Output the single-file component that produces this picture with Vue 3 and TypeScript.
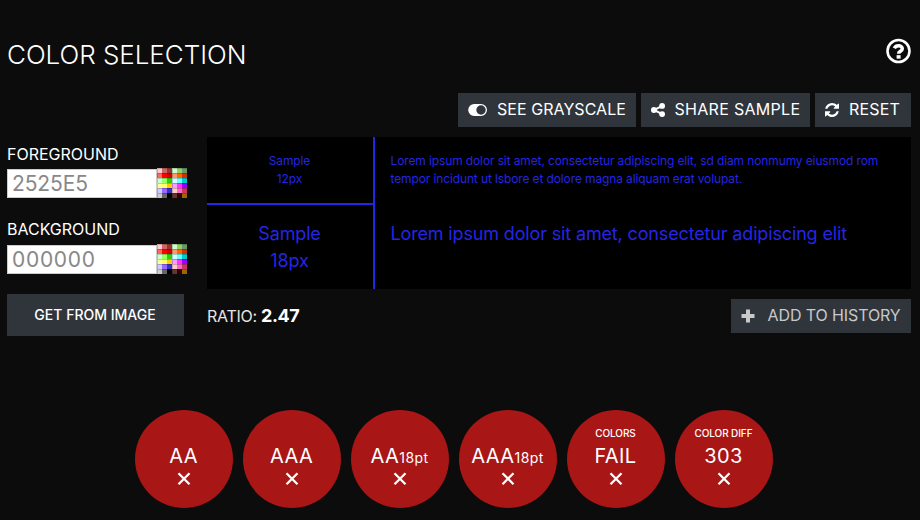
<script setup lang="ts">
import { ref } from 'vue'

interface Field {
  key: string
  label: string
  value: string
}

interface Result {
  top: string
  main: string
  suffix: string
}

const fields = ref<Field[]>([
  { key: 'fg', label: 'FOREGROUND', value: '2525E5' },
  { key: 'bg', label: 'BACKGROUND', value: '000000' },
])

const results: Result[] = [
  { top: '', main: 'AA', suffix: '' },
  { top: '', main: 'AAA', suffix: '' },
  { top: '', main: 'AA', suffix: '18pt' },
  { top: '', main: 'AAA', suffix: '18pt' },
  { top: 'COLORS', main: 'FAIL', suffix: '' },
  { top: 'COLOR DIFF', main: '303', suffix: '' },
]

const palette: string[] = [
  '#ffcccc', '#cc6666', '#993333', '#ccffcc', '#99cc66', '#669966',
  '#ff6666', '#ff0000', '#cc0000', '#ff9966', '#ff6600', '#cc3300',
  '#ccffcc', '#99ff66', '#33cc00', '#ccffff', '#66ffff', '#00cccc',
  '#ffff99', '#ffff66', '#ffcc00', '#ff99ff', '#ff33ff', '#9900ff',
  '#ccccff', '#9966ff', '#3333cc', '#ffcccc', '#ff66cc', '#cc3366',
  '#cccccc', '#666666', '#000000', '#663333', '#330000', '#996600',
]
</script>

<template>
  <main class="page">
    <header class="header">
      <h1 class="title">COLOR SELECTION</h1>
      <svg class="help" viewBox="0 0 26 26" fill="none" stroke="#fff">
        <circle cx="13.5" cy="13" r="11" stroke-width="2.6" />
        <path d="M9.300 10.300C10.300 8.400 11.600 7.800 13.500 7.800c2.200 0 3.800 1.200 3.800 2.900 0 2.600-3.700 2.500-3.700 5" stroke-width="3.500" />
        <path d="M11.600 18.900h4" stroke-width="3.500" />
      </svg>
    </header>

    <nav class="toolbar">
      <button class="btn gray">
        <svg class="toggle" viewBox="0 0 20 14">
          <path fill="#fff" fill-rule="evenodd" d="M6.200 1h6.800a6 6 0 0 1 0 12H6.200a6 6 0 0 1 0-12Zm6.800 1.300a4.700 4.700 0 1 0 0 9.400 4.700 4.700 0 0 0 0-9.400Z" />
        </svg>
        <span>SEE GRAYSCALE</span>
      </button>
      <button class="btn share">
        <svg class="icon" viewBox="0 0 14 14" fill="#fff">
          <path d="M11.300 2.900 2.900 7l8.400 4.100" fill="none" stroke="#fff" stroke-width="2" />
          <circle cx="11.100" cy="2.900" r="2.900" />
          <circle cx="2.900" cy="7" r="2.900" />
          <circle cx="11.100" cy="11.100" r="2.900" />
        </svg>
        <span>SHARE SAMPLE</span>
      </button>
      <button class="btn reset">
        <svg class="icon" viewBox="0 0 1536 1536" fill="#fff">
          <path d="M1511 928q0 5-1 7-64 268-268 434.500t-478 166.500q-146 0-282.500-55t-243.500-157l-129 129q-19 19-45 19t-45-19-19-45v-448q0-26 19-45t45-19h448q26 0 45 19t19 45-19 45l-137 137q71 66 161 102t187 36q134 0 250-65t186-179q11-17 53-117 8-23 30-23h192q13 0 22.500 9.500t9.500 22.500zm25-800v448q0 26-19 45t-45 19h-448q-26 0-45-19t-19-45 19-45l138-138q-148-137-349-137-134 0-250 65t-186 179q-11 17-53 117-8 23-30 23h-199q-13 0-22.500-9.500t-9.500-22.500v-7q65-268 270-434.500t480-166.500q146 0 284 55.500t245 156.500l130-129q19-19 45-19t45 19 19 45z" />
        </svg>
        <span>RESET</span>
      </button>
    </nav>

    <section class="workspace">
      <div class="controls">
        <div v-for="field in fields" :key="field.key" class="field">
          <label class="label" :class="field.key" :for="field.key">{{ field.label }}</label>
          <div class="picker">
            <input :id="field.key" v-model="field.value" class="hex" :class="field.key" />
            <svg class="swatch" viewBox="0 0 30 30" shape-rendering="crispEdges">
              <rect
                v-for="(color, i) in palette"
                :key="i"
                :x="(i % 6) * 5"
                :y="Math.floor(i / 6) * 5"
                width="5"
                height="5"
                :fill="color"
              />
              <path
                d="M0 .5h30M0 5.500h30M0 10.500h30M0 15.500h30M0 20.500h30M0 25.500h30M.5 0v30M15.500 0v30"
                stroke="#000"
                stroke-opacity=".2"
              />
            </svg>
          </div>
        </div>
        <button class="from-image"><span>GET FROM IMAGE</span></button>
      </div>

      <div class="preview">
        <div class="sample">
          <div class="cell name small"><span>Sample</span><span>12px</span></div>
          <div class="cell text small">
            <span>Lorem ipsum dolor sit amet, consectetur adipiscing elit, sd diam nonmumy eiusmod rom</span>
            <span>tempor incidunt ut lsbore et dolore magna aliquam erat volupat.</span>
          </div>
          <div class="cell name large"><span>Sample</span><span>18px</span></div>
          <div class="cell text large">
            <span>Lorem ipsum dolor sit amet, consectetur adipiscing elit</span>
          </div>
        </div>
        <div class="summary">
          <p class="ratio"><span>RATIO:</span><strong>2.47</strong></p>
          <button class="btn history">
            <svg class="plus" viewBox="0 0 14 14"><path d="M7 .5v13M.5 7h13" stroke="#c8c9ca" stroke-width="4" /></svg>
            <span>ADD TO HISTORY</span>
          </button>
        </div>
      </div>
    </section>

    <section class="results">
      <div v-for="(result, i) in results" :key="i" class="badge">
        <span class="badge-top">{{ result.top }}</span>
        <span class="badge-main">{{ result.main }}<small v-if="result.suffix">{{ result.suffix }}</small></span>
        <svg class="cross" viewBox="0 0 14 14"><path d="M1.500 1.200l11 11M12.500 1.200l-11 11" stroke="#fff" stroke-width="2.300" /></svg>
      </div>
    </section>
  </main>
</template>

<style>
body {
  background: #0c0c0c;
}
</style>

<style scoped>
.page {
  box-sizing: border-box;
  width: 920px;
  height: 520px;
  padding: 33px 9px 0 7px;
  overflow: hidden;
  background: #0c0c0c;
  color: #fff;
  font-family: Inter, "Liberation Sans", sans-serif;
}
button {
  border: 0;
  padding: 0;
  color: #fff;
  background: #30353c;
  font: inherit;
}
span, label {
  white-space: nowrap;
}
.header {
  display: flex;
  justify-content: space-between;
  height: 60px;
}
.title {
  margin: 0;
  font-size: 26px;
  font-weight: 300;
  line-height: 44px;
  letter-spacing: -0.04px;
}
.help {
  width: 26px;
  height: 26px;
  margin-top: 5px;
}
.toolbar {
  display: flex;
  justify-content: flex-end;
  gap: 5px;
}
.btn {
  display: flex;
  align-items: center;
  height: 34px;
  padding-left: 10px;
  box-sizing: border-box;
  font-size: 16px;
  letter-spacing: 0.05px;
}
.btn span {
  padding-bottom: 2px;
}
.gray { width: 178px; }
.share {
  width: 169px;
  letter-spacing: 0.3px;
}
.reset {
  width: 96px;
  letter-spacing: 0.2px;
}
.toggle {
  width: 20px;
  height: 14px;
  margin-right: 9px;
}
.icon {
  width: 14px;
  height: 14px;
  margin-right: 9.500px;
}
.reset .icon {
  margin-right: 10px;
}
.workspace {
  display: flex;
  gap: 20px;
  margin-top: 10px;
  height: 199px;
}
.controls {
  width: 180px;
}
.field {
  height: 76px;
}
.field + .field {
  height: 81px;
}
.label {
  display: block;
  height: 31px;
  line-height: 35px;
  font-size: 16px;
}
.label.bg {
  line-height: 33px;
}
.picker {
  display: flex;
  align-items: flex-end;
}
.hex {
  box-sizing: border-box;
  width: 150px;
  height: 29px;
  border: 1px solid #ccc;
  border-radius: 0;
  padding: 0 4px;
  background: #fff;
  color: #888;
  font-family: inherit;
  font-size: 21px;
  font-weight: 400;
  letter-spacing: -0.1px;
}
.hex.bg {
  letter-spacing: 0.7px;
}
.swatch {
  width: 30px;
  height: 30px;
}
.from-image {
  display: block;
  width: 177px;
  height: 42px;
  padding: 0 1px 2px 0;
  font-size: 14px;
  font-weight: 500;
}
.preview {
  width: 704px;
}
.sample {
  display: grid;
  grid-template-columns: 168px 536px;
  grid-template-rows: 68px 84px;
  height: 152px;
  background: #000;
  color: #2525e5;
}
.cell {
  display: flex;
  flex-direction: column;
  box-sizing: border-box;
}
.name {
  align-items: center;
  padding-right: 1px;
  border-right: 2px solid #2525e5;
}
.name.small {
  border-bottom: 2px solid #2525e5;
}
.text {
  align-items: flex-start;
  padding-left: 15.500px;
}
.small {
  padding-top: 15px;
  font-size: 12px;
  line-height: 18px;
  letter-spacing: -0.12px;
}
.large {
  padding-top: 15px;
  font-size: 18px;
  line-height: 27px;
  letter-spacing: -0.15px;
}
.summary {
  display: flex;
  justify-content: space-between;
  padding-top: 10px;
}
.ratio {
  display: flex;
  gap: 4px;
  margin: 0;
  line-height: 34px;
  font-size: 16px;
  letter-spacing: -0.25px;
}
.ratio span {
  color: #e4e4e4;
}
.ratio strong {
  font-size: 18px;
  font-weight: 700;
  letter-spacing: -0.4px;
}
.history {
  width: 180px;
  color: #c8c9ca;
  letter-spacing: -0.1px;
}
.plus {
  width: 14px;
  height: 14px;
  margin-right: 12.500px;
}
.results {
  display: flex;
  gap: 10px;
  margin: 74px 0 0 128px;
}
.badge {
  display: flex;
  flex-direction: column;
  align-items: center;
  box-sizing: border-box;
  width: 98px;
  height: 98px;
  padding: 16px 1px 0 0;
  border-radius: 50%;
  background: #a81616;
}
.badge-top {
  height: 15px;
  line-height: 15px;
  font-size: 10px;
  font-weight: 500;
  letter-spacing: -0.1px;
}
.badge-main {
  height: 31px;
  line-height: 31px;
  font-size: 20px;
  letter-spacing: 0.4px;
}
.badge-main small {
  font-size: 14px;
}
.cross {
  width: 14px;
  height: 14px;
}
</style>
